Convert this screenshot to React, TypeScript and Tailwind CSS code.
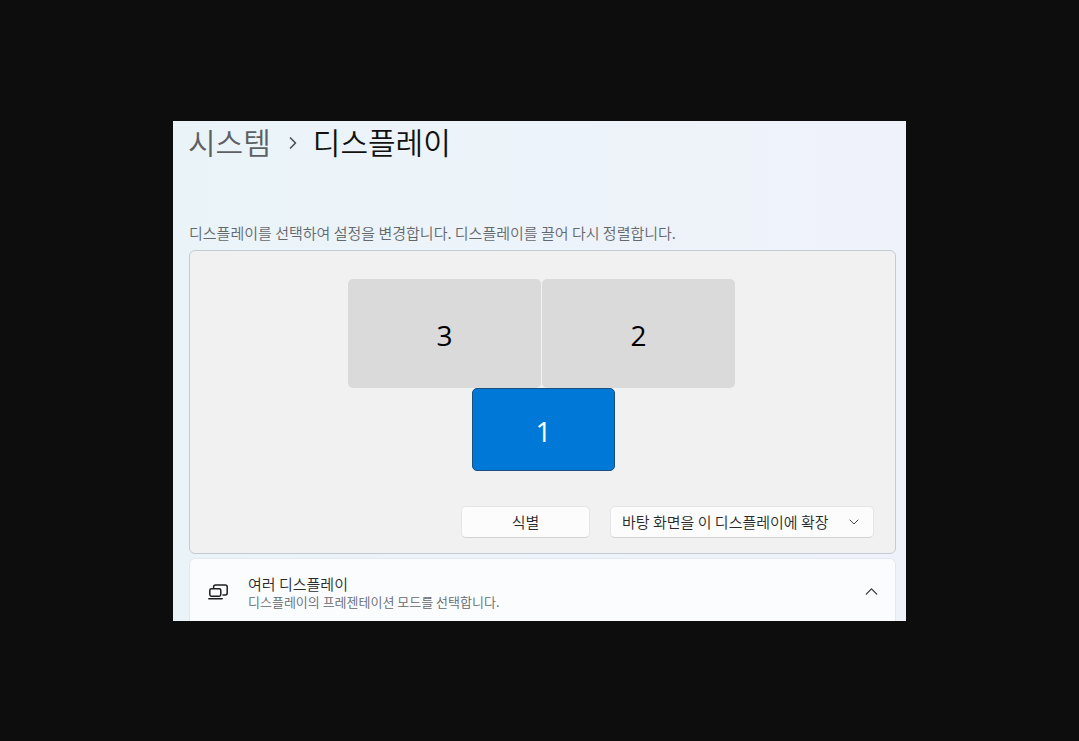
import { useState } from 'react';
import { ChevronDown, ChevronRight, ChevronUp } from 'lucide-react';

const monitors = [
  { id: 3, box: 'left-0 top-0 w-[193px] h-[109px]' },
  { id: 2, box: 'left-[194px] top-0 w-[193px] h-[109px]' },
  { id: 1, box: 'left-[124px] top-[109px] w-[143px] h-[83px]' },
];

function ScreensIcon() {
  return (
    <svg width="20" height="16" viewBox="0 0 20 16" fill="none" stroke="#1c1e20" strokeWidth="1.5" strokeLinecap="round" strokeLinejoin="round">
      <path d="M5.6 3.4V2.9Q5.6 0.9 7.6 0.9H17.2Q19.2 0.9 19.2 2.9V8.9Q19.2 10.9 17.2 10.9H15" />
      <rect x="1.8" y="4.8" width="11" height="7.4" rx="1.6" />
      <path d="M0.8 14.8H14.2" />
    </svg>
  );
}

export default function App() {
  const [selected, setSelected] = useState(1);
  const [open, setOpen] = useState(true);

  return (
    <div className="flex min-h-screen items-center justify-center bg-[#0d0d0d] font-['Noto_Sans_CJK_KR',sans-serif] text-[#2a2a2a]">
      <main className="w-full max-w-[733px] bg-linear-to-r from-[#eaf4f8] via-[#edf3fa] to-[#eff2fa] pl-4 pr-[10px]">
        <nav aria-label="breadcrumb" className="-ml-px flex h-10 items-center text-[30px] font-[350] leading-10">
          <a href="#system" className="text-[#5c6064]">시스템</a>
          <ChevronRight className="ml-3 mr-[10px] mt-1 text-[#4c5054]" size={20} strokeWidth={2} />
          <h1 className="font-[350] text-[#111111]">디스플레이</h1>
        </nav>

        <p className="mt-[60px] text-[15px] font-[350] leading-6 text-[#63686c]">
          디스플레이를 선택하여 설정을 변경합니다. 디스플레이를 끌어 다시 정렬합니다.
        </p>

        <section className="mt-[5px] rounded-md border border-[#c3cbd6] bg-[#f1f1f1] pb-[15px] pl-5 pr-[21px] pt-7">
          <div className="relative mx-auto h-[192px] w-[388px]">
            {monitors.map((m) => (
              <button
                key={m.id}
                aria-pressed={selected === m.id}
                onClick={() => setSelected(m.id)}
                className={`absolute rounded-[5px] pt-1 font-['Open_Sans',sans-serif] text-[28px] leading-8 ${m.box} ${
                  selected === m.id
                    ? 'border border-[#1c4f7d] bg-[#0078d7] text-white'
                    : 'bg-[#dadada] text-black'
                }`}
              >
                {m.id}
              </button>
            ))}
          </div>

          <div className="mt-[35px] flex justify-end gap-5 text-[15px] font-[350] leading-5">
            <button className="h-8 w-[129px] rounded-[5px] border border-[#e5e5e5] border-b-[#d2d2d2] bg-[#fcfcfc]">
              식별
            </button>
            <div className="relative w-[264px]">
              <select
                aria-label="여러 디스플레이"
                className="h-8 w-full appearance-none rounded-[5px] border border-[#e5e5e5] border-b-[#d2d2d2] bg-[#fcfcfc] pl-[11px] pr-9"
              >
                <option>바탕 화면을 이 디스플레이에 확장</option>
              </select>
              <ChevronDown className="pointer-events-none absolute right-3 top-2 text-[#4a4a4a]" size={16} strokeWidth={1.5} />
            </div>
          </div>
        </section>

        <button
          aria-expanded={open}
          onClick={() => setOpen(!open)}
          className="mt-1 flex w-full items-center rounded-t-md border border-b-0 border-[#e3e9f0] bg-[#fbfcfe] pb-[11px] pl-[18px] pr-[13px] pt-[15px] text-left"
        >
          <ScreensIcon />
          <span className="ml-5 flex-1">
            <span className="block text-[15px] font-[350] leading-5">여러 디스플레이</span>
            <span className="block text-[13px] font-[350] leading-4 text-[#63686c]">디스플레이의 프레젠테이션 모드를 선택합니다.</span>
          </span>
          <ChevronUp className={open ? 'text-[#33373a]' : 'rotate-180 text-[#33373a]'} size={21} strokeWidth={1.5} />
        </button>
      </main>
    </div>
  );
}
